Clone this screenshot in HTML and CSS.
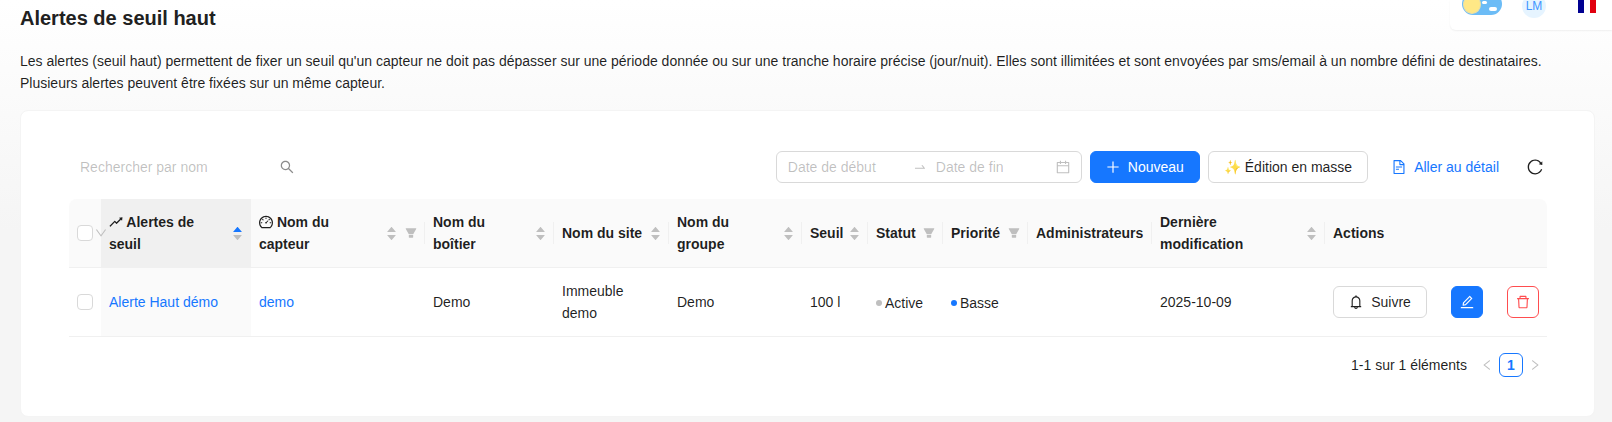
FILE: index.html
```html
<!DOCTYPE html>
<html lang="fr">
<head>
<meta charset="utf-8">
<title>Alertes de seuil haut</title>
<link rel="stylesheet" href="styles.css">
</head>
<body>
<svg class="sprite" aria-hidden="true">
<symbol id="i-search" viewBox="64 64 896 896"><path d="M909.6 854.5L649.9 594.8C690.2 542.7 712 479 712 412c0-80.2-31.3-155.4-87.9-212.1-56.6-56.7-132-87.9-212.1-87.9s-155.5 31.3-212.1 87.9C143.2 256.5 112 331.8 112 412c0 80.1 31.3 155.5 87.9 212.1C256.5 680.8 331.8 712 412 712c67 0 130.6-21.8 182.7-62l259.7 259.6a8.2 8.2 0 0011.6 0l43.6-43.5a8.2 8.2 0 000-11.6zM570.4 570.4C528 612.7 471.8 636 412 636s-116-23.3-158.4-65.6C211.3 528 188 471.8 188 412s23.3-116.1 65.6-158.4C296 211.3 352.2 188 412 188s116.1 23.2 158.4 65.6S636 352.2 636 412s-23.3 116.1-65.6 158.4z"/></symbol>
<symbol id="i-cal" viewBox="64 64 896 896"><path d="M880 184H712v-64c0-4.4-3.6-8-8-8h-56c-4.4 0-8 3.6-8 8v64H384v-64c0-4.4-3.6-8-8-8h-56c-4.4 0-8 3.6-8 8v64H144c-17.7 0-32 14.3-32 32v664c0 17.7 14.3 32 32 32h736c17.7 0 32-14.3 32-32V216c0-17.7-14.3-32-32-32zm-40 656H184V460h656v380zM184 392V256h128v48c0 4.4 3.6 8 8 8h56c4.4 0 8-3.6 8-8v-48h256v48c0 4.4 3.6 8 8 8h56c4.4 0 8-3.6 8-8v-48h128v136H184z"/></symbol>
<symbol id="i-swap" viewBox="0 0 1024 1024"><path d="M873.1 596.2l-164-208A32 32 0 00684 376h-64.8c-6.7 0-10.4 7.7-6.3 13l144.3 183H152c-4.4 0-8 3.6-8 8v60c0 4.4 3.6 8 8 8h695.9c26.8 0 41.7-30.8 25.2-51.8z"/></symbol>
<symbol id="i-plus" viewBox="64 64 896 896"><path d="M482 152h60q8 0 8 8v704q0 8-8 8h-60q-8 0-8-8V160q0-8 8-8z"/><path d="M192 474h640q8 0 8 0h24q8 0 8 8v60q0 8-8 8H160q-8 0-8-8v-60q0-8 8-8z"/></symbol>
<symbol id="i-file" viewBox="64 64 896 896"><path d="M854.6 288.6L639.4 73.4c-6-6-14.1-9.4-22.6-9.4H192c-17.7 0-32 14.3-32 32v832c0 17.7 14.3 32 32 32h640c17.7 0 32-14.3 32-32V311.3c0-8.5-3.4-16.7-9.4-22.7zM790.2 326H602V137.8L790.2 326zm1.8 562H232V136h302v216a42 42 0 0042 42h216v494zM504 618H320c-4.4 0-8 3.6-8 8v48c0 4.4 3.6 8 8 8h184c4.4 0 8-3.6 8-8v-48c0-4.4-3.6-8-8-8zM312 490v48c0 4.4 3.6 8 8 8h384c4.4 0 8-3.6 8-8v-48c0-4.4-3.6-8-8-8H320c-4.4 0-8 3.6-8 8z"/></symbol>
<symbol id="i-reload" viewBox="64 64 896 896"><path d="M909.1 209.3l-56.4 44.1C775.8 155.1 656.2 92 521.9 92 290 92 102.3 279.5 102 511.5 101.7 743.7 289.8 932 521.9 932c181.3 0 335.8-115 394.6-276.1 1.5-4.2-.7-8.9-4.9-10.3l-56.7-19.5a8 8 0 00-10.1 4.8c-1.8 5-3.8 10-5.9 14.9-17.3 41-42.1 77.8-73.7 109.4A344.77 344.77 0 01655.9 829c-42.3 17.9-87.4 27-133.8 27-46.5 0-91.5-9.1-133.8-27A341.5 341.5 0 01279 755.2a342.16 342.16 0 01-73.7-109.4c-17.9-42.4-27-87.4-27-133.9s9.1-91.5 27-133.9c17.3-41 42.1-77.8 73.7-109.4 31.6-31.6 68.4-56.4 109.3-73.8 42.3-17.9 87.4-27 133.8-27 46.5 0 91.5 9.1 133.8 27a341.5 341.5 0 01109.3 73.8c9.9 9.9 19.2 20.4 27.8 31.4l-60.2 47a8 8 0 003 14.1l175.6 43c5 1.2 9.9-2.6 9.9-7.7l.8-180.9c-.1-6.6-7.8-10.3-13-6.2z"/></symbol>
<symbol id="i-filter" viewBox="64 64 896 896"><path d="M349 838c0 17.7 14.2 32 31.8 32h262.4c17.6 0 31.8-14.3 31.8-32V642H349v196zm531.1-684H143.9c-24.5 0-39.8 26.7-27.5 48l221.3 376h348.8l221.3-376c12.1-21.3-3.2-48-27.7-48z"/></symbol>
<symbol id="i-up" viewBox="64 64 896 896"><path d="M858.9 689L530.5 308.2c-9.4-10.9-27.5-10.9-37 0L165.1 689c-12.2 14.2-1.2 35 18.5 35h656.8c19.7 0 30.7-20.8 18.5-35z"/></symbol>
<symbol id="i-down" viewBox="64 64 896 896"><path d="M840.4 300H183.6c-19.7 0-30.7 20.8-18.6 35l328.4 380.8c9.4 10.9 27.6 10.9 37 0L858.9 335c12.2-14.2 1.2-35-18.5-35z"/></symbol>
<symbol id="i-left" viewBox="64 64 896 896"><path d="M724 218.3V141c0-6.7-7.7-10.4-12.9-6.3L260.3 486.8a31.86 31.86 0 000 50.3l450.8 352.1c5.3 4.1 12.9.4 12.9-6.3v-77.3c0-4.9-2.3-9.6-6.1-12.6l-360-281 360-281.1c3.8-3 6.1-7.7 6.1-12.6z"/></symbol>
<symbol id="i-right" viewBox="64 64 896 896"><path d="M765.7 486.8L314.9 134.7A7.97 7.97 0 00302 141v77.3c0 4.9 2.3 9.6 6.1 12.6l360 281.1-360 281.1c-3.9 3-6.1 7.7-6.1 12.6V883c0 6.7 7.7 10.4 12.9 6.3l450.8-352.1a31.96 31.96 0 000-50.4z"/></symbol>
<symbol id="i-chev" viewBox="64 64 896 896"><path d="M884 256h-75c-5.1 0-9.9 2.5-12.9 6.6L512 654.2 227.9 262.6c-3-4.1-7.8-6.6-12.9-6.6h-75c-6.5 0-10.3 7.4-6.5 12.7l352.6 486.1c12.8 17.6 39 17.6 51.7 0l352.6-486.1c3.9-5.3.1-12.7-6.4-12.7z"/></symbol>
<symbol id="i-rise" viewBox="64 64 896 896"><path d="M917 211.1l-199.2 24c-6.6.8-9.4 8.9-4.7 13.6l59.3 59.3-226 226-101.8-101.7c-6.2-6.2-16.4-6.2-22.6 0L100.3 754.1a8.03 8.03 0 000 11.3l45 45.2c3.1 3.1 8.2 3.1 11.3 0L433.3 534 535 635.7c6.3 6.2 16.4 6.2 22.6 0L829 364.5l59.3 59.3a8.03 8.03 0 0013.6-4.7l24-199.2c.7-5.1-3.7-9.5-8.9-8.8z"/></symbol>
<symbol id="i-dash" viewBox="64 64 896 896"><path d="M924.8 385.6a446.7 446.7 0 00-96-142.4 446.7 446.7 0 00-142.4-96C631.1 123.8 572.5 112 512 112s-119.1 11.8-174.4 35.2a446.7 446.7 0 00-142.4 96 446.7 446.7 0 00-96 142.4C75.8 440.9 64 499.5 64 560c0 132.7 58.3 257.7 159.9 343.1l1.7 1.4c5.8 4.8 13.1 7.5 20.6 7.5h531.7c7.5 0 14.8-2.7 20.6-7.5l1.7-1.4C901.7 817.7 960 692.7 960 560c0-60.5-11.9-119.1-35.2-174.4zM761.4 836H262.6A371.12 371.12 0 01140 560c0-99.4 38.7-192.8 109-263 70.3-70.3 163.7-109 263-109 99.4 0 192.8 38.7 263 109 70.3 70.3 109 163.7 109 263 0 105.6-44.5 205.5-122.6 276zM623.5 421.5a8.03 8.03 0 00-11.3 0L527.7 506c-18.7-5-39.4-.2-54.1 14.5a55.95 55.95 0 000 79.2 55.95 55.95 0 0079.2 0 55.87 55.87 0 0014.5-54.1l84.5-84.5c3.1-3.1 3.1-8.2 0-11.3l-28.3-28.3zM490 320h44c4.4 0 8-3.6 8-8v-80c0-4.4-3.6-8-8-8h-44c-4.4 0-8 3.6-8 8v80c0 4.4 3.6 8 8 8zm260 218v44c0 4.4 3.6 8 8 8h80c4.4 0 8-3.6 8-8v-44c0-4.4-3.6-8-8-8h-80c-4.4 0-8 3.6-8 8zm12.7-197.2l-31.1-31.1a8.03 8.03 0 00-11.3 0l-56.6 56.6a8.03 8.03 0 000 11.3l31.1 31.1c3.1 3.1 8.2 3.1 11.3 0l56.6-56.6c3.1-3.1 3.1-8.2 0-11.3zm-458.6-31.1a8.03 8.03 0 00-11.3 0l-31.1 31.1a8.03 8.03 0 000 11.3l56.6 56.6c3.1 3.1 8.2 3.1 11.3 0l31.1-31.1c3.1-3.1 3.1-8.2 0-11.3l-56.6-56.6zM262 530h-80c-4.4 0-8 3.6-8 8v44c0 4.4 3.6 8 8 8h80c4.4 0 8-3.6 8-8v-44c0-4.4-3.6-8-8-8z"/></symbol>
<symbol id="i-bell" viewBox="64 64 896 896"><path d="M816 768h-24V428c0-141.1-104.3-257.7-240-277.1V112c0-22.1-17.9-40-40-40s-40 17.9-40 40v38.9c-135.7 19.4-240 136-240 277.1v340h-24c-17.7 0-32 14.3-32 32v32c0 4.4 3.6 8 8 8h216c0 61.8 50.2 112 112 112s112-50.2 112-112h216c4.4 0 8-3.6 8-8v-32c0-17.7-14.3-32-32-32zM512 888c-26.5 0-48-21.5-48-48h96c0 26.5-21.5 48-48 48zM304 768V428c0-55.6 21.6-107.8 60.9-147.1S456.4 220 512 220c55.6 0 107.8 21.6 147.1 60.9S720 372.4 720 428v340H304z"/></symbol>
<symbol id="i-edit" viewBox="64 64 896 896"><path d="M257.7 752c2 0 4-.2 6-.5L431.9 722c2-.4 3.9-1.3 5.3-2.8l423.9-423.9a9.96 9.96 0 000-14.1L694.9 114.9c-1.9-1.9-4.4-2.9-7.1-2.9s-5.2 1-7.1 2.9L256.8 538.8c-1.5 1.5-2.4 3.3-2.8 5.3l-29.5 168.2a33.5 33.5 0 009.4 29.8c6.6 6.4 14.9 9.9 23.8 9.9zm67.4-174.4L687.8 215l73.3 73.3-362.7 362.6-88.9 15.7 15.6-89zM880 836H144c-17.7 0-32 14.3-32 32v36c0 4.4 3.6 8 8 8h784c4.4 0 8-3.6 8-8v-36c0-17.7-14.3-32-32-32z"/></symbol>
<symbol id="i-del" viewBox="64 64 896 896"><path d="M360 184h-8c4.4 0 8-3.6 8-8v8h304v-8c0 4.4 3.6 8 8 8h-8v72h72v-80c0-35.3-28.7-64-64-64H352c-35.3 0-64 28.7-64 64v80h72v-72zm504 72H160c-17.7 0-32 14.3-32 32v32c0 4.4 3.6 8 8 8h60.4l24.7 523c1.6 34.1 29.8 61 63.9 61h454c34.2 0 62.3-26.8 63.9-61l24.7-523H888c4.4 0 8-3.6 8-8v-32c0-17.7-14.3-32-32-32zM731.3 840H292.7l-24.2-512h487l-24.2 512z"/></symbol>
</svg>

<div class="topbar">
  <span class="theme-toggle">
    <span class="knob"></span>
    <span class="cloud cloud-a"></span>
    <span class="cloud cloud-b"></span>
  </span>
  <span class="avatar">LM</span>
  <span class="flag"><i class="fr-blue"></i><i class="fr-white"></i><i class="fr-red"></i></span>
</div>

<main class="page">
  <h1 class="title">Alertes de seuil haut</h1>
  <p class="intro">Les alertes (seuil haut) permettent de fixer un seuil qu'un capteur ne doit pas dépasser sur une période donnée ou sur une tranche horaire précise (jour/nuit). Elles sont illimitées et sont envoyées par sms/email à un nombre défini de destinataires. Plusieurs alertes peuvent être fixées sur un même capteur.</p>

  <section class="card">
    <div class="toolbar">
      <label class="search">
        <input class="search-input" placeholder="Rechercher par nom">
        <svg class="ico ico-search"><use href="#i-search"/></svg>
      </label>
      <div class="tools">
        <div class="range">
          <input class="range-input" placeholder="Date de début">
          <svg class="ico range-arrow"><use href="#i-swap"/></svg>
          <input class="range-input" placeholder="Date de fin">
          <svg class="ico range-cal"><use href="#i-cal"/></svg>
        </div>
        <button class="btn btn-primary"><svg class="ico"><use href="#i-plus"/></svg>Nouveau</button>
        <button class="btn">✨ Édition en masse</button>
        <a class="btn btn-link"><svg class="ico"><use href="#i-file"/></svg>Aller au détail</a>
        <span class="reload"><svg class="ico ico-reload"><use href="#i-reload"/></svg></span>
      </div>
    </div>

    <table class="grid">
      <colgroup>
        <col class="c-sel"><col class="c-alert"><col class="c-sensor"><col class="c-box"><col class="c-site"><col class="c-group"><col class="c-seuil"><col class="c-status"><col class="c-prio"><col class="c-admin"><col class="c-date"><col class="c-actions">
      </colgroup>
      <thead>
        <tr>
          <th class="th-sel"><span class="sel-in"><span class="check"></span><svg class="ico chev"><use href="#i-chev"/></svg></span></th>
          <th class="th-sorted"><div class="th-in"><span class="th-t"><svg class="ico th-ico"><use href="#i-rise"/></svg> Alertes de seuil</span><span class="sorter"><svg class="ico caret caret-on"><use href="#i-up"/></svg><svg class="ico caret"><use href="#i-down"/></svg></span></div></th>
          <th class="sep"><div class="th-in"><span class="th-t"><svg class="ico th-ico"><use href="#i-dash"/></svg> Nom du capteur</span><span class="sorter"><svg class="ico caret"><use href="#i-up"/></svg><svg class="ico caret"><use href="#i-down"/></svg></span><svg class="ico filter"><use href="#i-filter"/></svg></div></th>
          <th class="sep"><div class="th-in"><span class="th-t">Nom du boîtier</span><span class="sorter"><svg class="ico caret"><use href="#i-up"/></svg><svg class="ico caret"><use href="#i-down"/></svg></span></div></th>
          <th class="sep"><div class="th-in"><span class="th-t th-one">Nom du site</span><span class="sorter"><svg class="ico caret"><use href="#i-up"/></svg><svg class="ico caret"><use href="#i-down"/></svg></span></div></th>
          <th class="sep"><div class="th-in"><span class="th-t">Nom du groupe</span><span class="sorter"><svg class="ico caret"><use href="#i-up"/></svg><svg class="ico caret"><use href="#i-down"/></svg></span></div></th>
          <th class="sep"><div class="th-in"><span class="th-t th-one">Seuil</span><span class="sorter"><svg class="ico caret"><use href="#i-up"/></svg><svg class="ico caret"><use href="#i-down"/></svg></span></div></th>
          <th class="sep"><div class="th-in"><span class="th-t th-one">Statut</span><svg class="ico filter"><use href="#i-filter"/></svg></div></th>
          <th class="sep"><div class="th-in"><span class="th-t th-one">Priorité</span><svg class="ico filter"><use href="#i-filter"/></svg></div></th>
          <th class="sep"><div class="th-in"><span class="th-t th-one">Administrateurs</span></div></th>
          <th class="sep"><div class="th-in"><span class="th-t">Dernière modification</span><span class="sorter"><svg class="ico caret"><use href="#i-up"/></svg><svg class="ico caret"><use href="#i-down"/></svg></span></div></th>
          <th class="th-last"><div class="th-in"><span class="th-t">Actions</span></div></th>
        </tr>
      </thead>
      <tbody>
        <tr>
          <td class="td-sel"><span class="check"></span></td>
          <td class="td-sorted"><a class="link">Alerte Haut démo</a></td>
          <td><a class="link">demo</a></td>
          <td>Demo</td>
          <td>Immeuble demo</td>
          <td>Demo</td>
          <td>100 l</td>
          <td><span class="badge"><i class="dot dot-grey"></i>Active</span></td>
          <td><span class="badge"><i class="dot dot-blue"></i>Basse</span></td>
          <td></td>
          <td>2025-10-09</td>
          <td>
            <div class="actions">
              <button class="btn btn-follow"><svg class="ico"><use href="#i-bell"/></svg>Suivre</button>
              <button class="btn btn-primary btn-square"><svg class="ico"><use href="#i-edit"/></svg></button>
              <button class="btn btn-danger btn-square"><svg class="ico"><use href="#i-del"/></svg></button>
            </div>
          </td>
        </tr>
      </tbody>
    </table>

    <nav class="pager">
      <span class="pager-total">1-1 sur 1 éléments</span>
      <span class="pager-nav"><svg class="ico"><use href="#i-left"/></svg></span>
      <span class="pager-cur">1</span>
      <span class="pager-nav"><svg class="ico"><use href="#i-right"/></svg></span>
    </nav>
  </section>
</main>
</body>
</html>
```

FILE: styles.css
```css
* { box-sizing: border-box; }
html, body { margin: 0; padding: 0; }
html { height: 422px; overflow: hidden; }
body {
  height: 422px;
  overflow: hidden;
  background: linear-gradient(180deg, #ffffff 0, #f5f5f5 230px);
  font-family: "Liberation Sans", Arial, sans-serif;
  font-size: 14px;
  line-height: 22px;
  color: rgba(0, 0, 0, .88);
  position: relative;
}
.sprite { display: none; }
.ico { width: 14px; height: 14px; fill: currentColor; display: block; flex: none; }

/* top-right floating header */
.topbar {
  position: absolute;
  top: 0;
  right: 0;
  width: 162px;
  height: 30px;
  overflow: hidden;
  background: #fff;
  border-bottom-left-radius: 6px;
  box-shadow: 0 1px 2px rgba(0, 0, 0, .06);
}
.theme-toggle {
  position: absolute;
  left: 12px;
  top: -7px;
  width: 40px;
  height: 22px;
  border-radius: 11px;
  background: #6cbcf6;
}
.knob {
  position: absolute;
  left: 1px;
  top: 2px;
  width: 18px;
  height: 19px;
  border-radius: 50%;
  background: #ffe886;
  border: 1px solid #e9dfa8;
}
.cloud { position: absolute; background: #fff; border-radius: 3px; }
.cloud-a { left: 20px; top: 8px; width: 5px; height: 3px; }
.cloud-b { left: 27px; top: 14px; width: 8px; height: 4px; }
.avatar {
  position: absolute;
  left: 72px;
  top: -6px;
  width: 24px;
  height: 24px;
  border-radius: 50%;
  background: #e6f4ff;
  color: #4096ff;
  font-size: 12px;
  line-height: 24px;
  text-align: center;
}
.flag {
  position: absolute;
  left: 128px;
  top: -1px;
  width: 18px;
  height: 14px;
  display: flex;
}
.flag i { flex: 1; display: block; }
.fr-blue { background: #000091; }
.fr-white { background: #fff; }
.fr-red { background: #e1000f; }

/* page */
.page { padding: 4px 17px 0 20px; }
.title { margin: 0; font-size: 20px; line-height: 28px; font-weight: 700; color: #212121; }
.intro { margin: 18px 0 16px; color: rgba(0, 0, 0, .88); }

.card {
  height: 307px;
  background: #fff;
  border: 1px solid #f4f4f4;
  border-radius: 8px;
  padding: 40px 47px 0 48px;
}

/* toolbar */
.toolbar { display: flex; justify-content: space-between; align-items: center; height: 32px; margin-bottom: 16px; }
.search { display: flex; align-items: center; width: 231px; height: 32px; padding: 0 6px 0 11px; }
.search-input, .range-input {
  border: 0;
  outline: 0;
  padding: 0;
  background: transparent;
  font: inherit;
  min-width: 0;
  flex: 1;
  color: inherit;
}
.search-input::placeholder, .range-input::placeholder { color: rgba(0, 0, 0, .25); opacity: 1; }
.ico-search { color: rgba(0, 0, 0, .45); }
.tools { display: flex; align-items: center; gap: 8px; }

.range {
  display: flex;
  align-items: center;
  width: 306px;
  height: 32px;
  border: 1px solid #d9d9d9;
  border-radius: 6px;
  padding: 0 11px;
  background: #fff;
}
.range-arrow { margin: 0 9px 0 8px; color: rgba(0, 0, 0, .25); }
.range-cal { margin-left: 3px; color: rgba(0, 0, 0, .25); }

.btn {
  display: inline-flex;
  align-items: center;
  justify-content: center;
  gap: 8px;
  height: 32px;
  padding: 0 15px;
  border: 1px solid #d9d9d9;
  border-radius: 6px;
  background: #fff;
  color: rgba(0, 0, 0, .88);
  font: inherit;
  white-space: nowrap;
}
.btn-primary { background: #1677ff; border-color: #1677ff; color: #fff; }
.btn-link { border-color: transparent; background: transparent; color: #1677ff; }
.btn-square { width: 32px; padding: 0; }
.btn-danger { border-color: #ff4d4f; color: #ff4d4f; }
.reload { margin: 0 4px 1px 4px; }
.ico-reload { width: 16px; height: 16px; color: rgba(0, 0, 0, .88); }

/* table */
.grid { width: 1478px; table-layout: fixed; border-collapse: separate; border-spacing: 0; }
.c-sel { width: 32px; }
.c-alert { width: 150px; }
.c-sensor { width: 174px; }
.c-box { width: 129px; }
.c-site { width: 115px; }
.c-group { width: 133px; }
.c-seuil { width: 66px; }
.c-status { width: 75px; }
.c-prio { width: 85px; }
.c-admin { width: 124px; }
.c-date { width: 173px; }
.c-actions { width: 222px; }

.grid th, .grid td { padding: 12px 8px; border-bottom: 1px solid #f0f0f0; text-align: left; vertical-align: middle; overflow-wrap: break-word; }
.grid th { background: #fafafa; font-weight: 700; position: relative; }
.grid th:first-child { border-top-left-radius: 8px; }
.grid th.th-last { border-top-right-radius: 8px; }
.grid th.th-sorted { background: #f0f0f0; }
.grid td.td-sorted { background: #fafafa; }
.grid th.th-sel { z-index: 1; overflow: visible; }
.sep::after {
  content: "";
  position: absolute;
  top: 23px;
  right: 0;
  width: 1px;
  height: 22px;
  background: #f0f0f0;
}
.sel-in { display: flex; align-items: center; gap: 2px; width: 30px; }
.check { display: block; width: 16px; height: 16px; border: 1px solid #d9d9d9; border-radius: 4px; background: #fff; flex: none; }
.chev { width: 12px; height: 12px; color: #bfbfbf; }
.th-in { display: flex; align-items: center; gap: 8px; }
.th-t { flex: 1; min-width: 0; }
.th-one { white-space: nowrap; }
.th-ico { display: inline-block; vertical-align: -2px; }
.sorter { display: flex; flex-direction: column; align-items: center; width: 12px; flex: none; }
.caret { width: 11px; height: 11px; color: #bfbfbf; }
.caret + .caret { margin-top: -3px; }
.caret-on { color: #1677ff; }
.filter { width: 12px; height: 12px; color: #bfbfbf; }

.link { color: #1677ff; }
.badge { display: inline-flex; align-items: center; gap: 3px; }
.dot { display: block; width: 6px; height: 6px; border-radius: 50%; }
.dot-grey { background: #bfbfbf; }
.dot-blue { background: #1677ff; }
.actions { display: flex; gap: 24px; }
.btn-follow { width: 94px; padding: 0; }

/* pager */
.pager { display: flex; justify-content: flex-end; align-items: center; margin-top: 16px; height: 24px; }
.pager-total { margin-right: 8px; }
.pager-nav { width: 24px; height: 24px; display: flex; align-items: center; justify-content: center; color: #bfbfbf; }
.pager-nav .ico { width: 12px; height: 12px; }
.pager-cur {
  width: 24px;
  height: 24px;
  line-height: 22px;
  text-align: center;
  border: 1px solid #1677ff;
  border-radius: 6px;
  color: #1677ff;
  font-weight: 700;
}
```
